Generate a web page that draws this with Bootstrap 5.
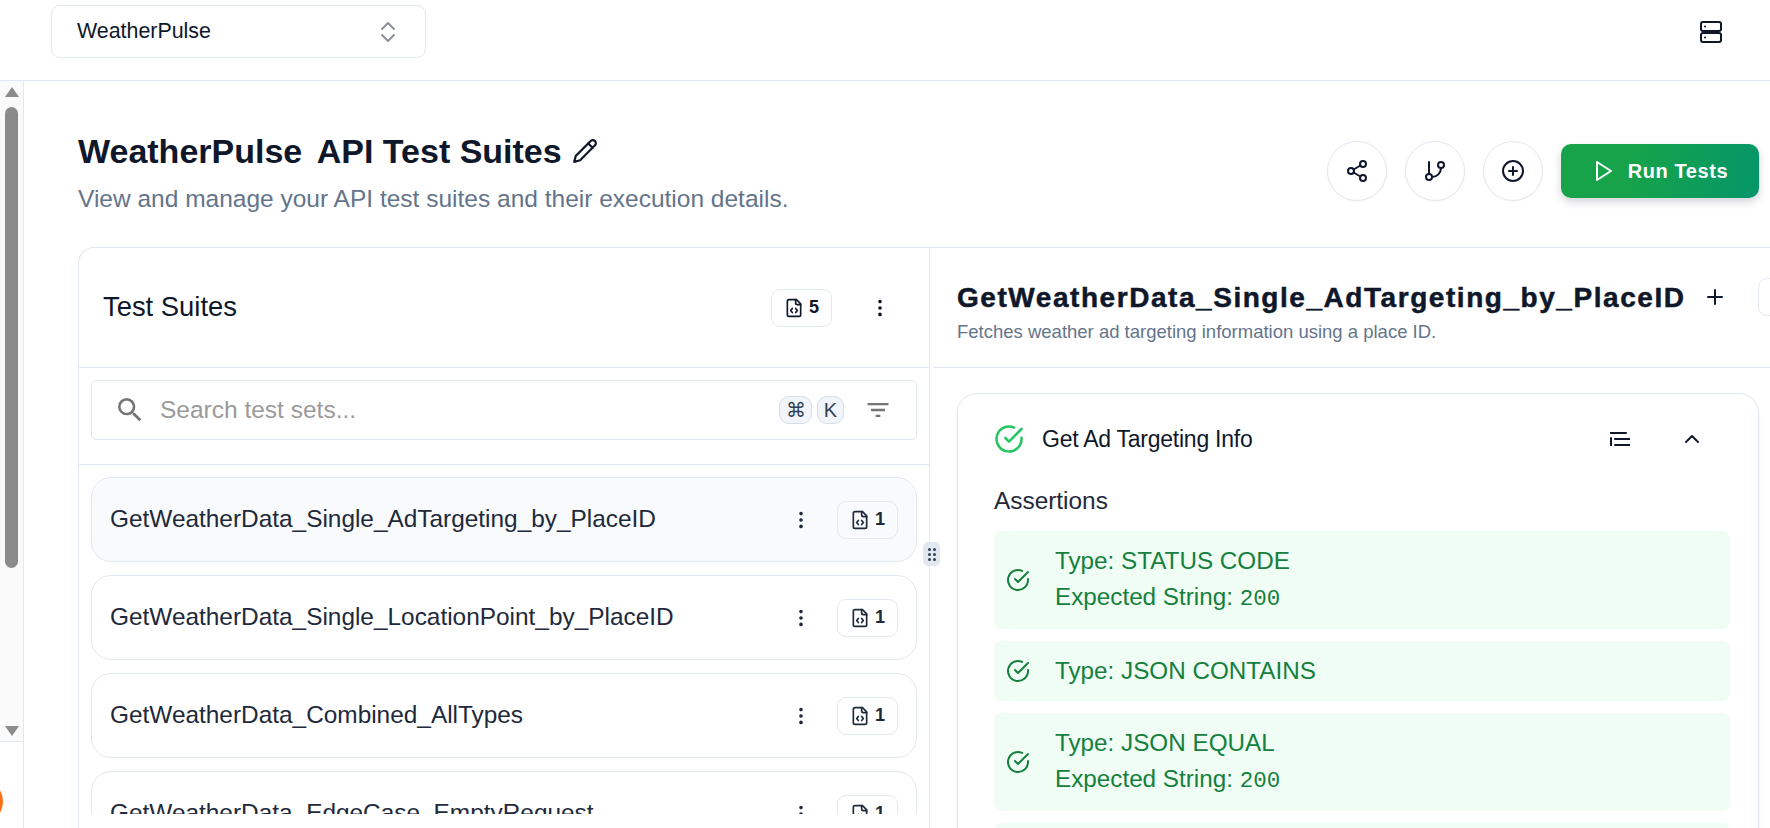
<!DOCTYPE html>
<html lang="en">
<head>
<meta charset="UTF-8">
<title>WeatherPulse API Test Suites</title>
<link href="https://cdn.jsdelivr.net/npm/bootstrap@5.3.3/dist/css/bootstrap.min.css" rel="stylesheet">
<style>
    html, body { height: 100%; }
    body {
        font-family: "Liberation Sans", Arial, sans-serif;
        color: #0f172a;
        background: #fff;
        overflow: hidden;
    }
    svg.ico { fill: none; stroke: currentColor; stroke-width: 2; stroke-linecap: round; stroke-linejoin: round; flex-shrink: 0; display: block; }

    .top-bar { height: 81px; padding: 0 47px 17px 51px; border-bottom: 1px solid #e2e8f0; flex-shrink: 0; }
    .project-select { width: 375px; height: 53px; padding: 0 27px 0 25px; border: 1px solid #e2e8f0; border-radius: 9px; font-size: 21.4px; }
    .project-select svg { color: #8a8f98; }

    .work-area { min-height: 0; }
    .side-rail { width: 24px; border-right: 1px solid #e2e8f0; flex-shrink: 0; }
    .rail-scroll { background: #fafafa; height: 661px; padding: 5px 5px 0; border-bottom: 1px solid #e2e8f0; }
    .arrow-up { width: 0; height: 0; margin: 1px auto 10px; border: 7.5px solid transparent; border-top: 0; border-bottom: 10px solid #8b8b8b; }
    .arrow-down { width: 0; height: 0; margin: auto auto 5px; border: 7.5px solid transparent; border-bottom: 0; border-top: 10px solid #8b8b8b; }
    .rail-thumb { width: 13px; height: 461px; background: #8b8b8b; border-radius: 7px; }
    .rail-foot { padding-top: 38px; overflow: hidden; flex-grow: 1; }
    .avatar-dot { width: 43px; height: 43px; border-radius: 50%; background: #f97316; margin-left: -40px; }

    .content-pane { min-width: 0; padding: 47px 0 0 54px; }
    .head-row { padding-right: 11px; height: 119px; flex-shrink: 0; }
    .title-line { gap: 10px; }
    .page-title { font-size: 34px; font-weight: 700; line-height: 46px; margin: 0; }
    .api-words { margin-left: 5px; }
    .page-sub { font-size: 24.5px; color: #64748b; line-height: 34px; margin-top: 8px; }
    .head-actions { gap: 18px; margin-top: 13px; }
    .round-btn { width: 60px; height: 60px; border-radius: 50%; border: 1px solid #e2e8f0; background: #fff; color: #0f172a; padding: 0; box-shadow: 0 1px 2px rgba(15,23,42,.03); }
    .run-btn { width: 198px; height: 54px; border: 0; border-radius: 10px; color: #fff; font-weight: 700; font-size: 20px; letter-spacing: .6px; background: linear-gradient(100deg, #16a34a 35%, #059669 100%); box-shadow: 0 4px 8px rgba(15,23,42,.18); }

    .suites-card { min-height: 0; width: 1760px; border: 1px solid #e2e8f0; border-bottom: 0; border-radius: 16px 0 0 0; }
    .left-panel { width: 851px; flex-shrink: 0; border-right: 1px solid #e2e8f0; position: relative; }
    .panel-head { height: 120px; padding: 0 38px 0 24px; border-bottom: 1px solid #e2e8f0; flex-shrink: 0; }
    .panel-title { font-size: 27.4px; margin: 0; font-weight: 400; }
    .head-tools { gap: 37px; }
    .count-pill { height: 38px; width: 61px; border: 1px solid #e2e8f0; border-radius: 9px; font-size: 18px; font-weight: 700; gap: 5px; background: #fff; }
    .search-wrap { height: 97px; padding: 12px 12px 24px; border-bottom: 1px solid #e2e8f0; flex-shrink: 0; }
    .search-box { height: 60px; border: 1px solid #e2e8f0; border-radius: 5px; padding: 0 24px 0 22px; }
    .search-box svg.mat { fill: #757575; }
    .search-input { border: 0; outline: 0; background: transparent; font: 24.5px "Liberation Sans", Arial, sans-serif; color: #0f172a; min-width: 0; }
    .search-input::placeholder { color: #9a9a9a; opacity: 1; }
    .key-cap { height: 28px; border: 1px solid #d5deea; background: #f1f5f9; border-radius: 10px; font-size: 20px; color: #334155; }
    .key-cmd { width: 33px; margin-right: 5px; }
    .key-k { width: 27px; }
    .filter-ico { margin-left: 20px; }
    .suite-list { height: 349px; overflow: hidden; padding: 12px 12px 0; gap: 13px; }
    .suite-row { height: 85px; flex-shrink: 0; border: 1px solid #e2e8f0; border-radius: 20px; padding: 0 18px 0 18px; font-size: 24.4px; color: #1e293b; }
    .suite-row.is-active { background: #f8fafc; }
    .suite-row .count-pill { background: transparent; margin-left: 25px; }
    .drag-handle { position: absolute; right: -11px; top: 294px; width: 17px; height: 24px; background: #e2e8f0; border-radius: 5px; z-index: 2; display: grid; grid-template-columns: 3px 3px; gap: 2px 2px; place-content: center; }
    .drag-handle i { width: 3px; height: 3px; background: #334155; border-radius: 50%; }

    .detail-panel { min-width: 0; }
    .detail-head { height: 120px; margin-left: 3px; padding: 8px 0 0 24px; border-bottom: 1px solid #e2e8f0; flex-shrink: 0; }
    .detail-title { font-size: 28px; font-weight: 700; margin: 0; line-height: 34px; letter-spacing: 1.55px; -webkit-text-stroke: .5px #0f172a; white-space: nowrap; }
    .detail-sub { font-size: 18.5px; color: #64748b; margin-top: 6px; line-height: 22px; }
    .title-plus { margin: 0 0 30px 18px; }
    .ghost-pill { width: 60px; height: 38px; border: 1px solid #e2e8f0; border-radius: 9px; flex-shrink: 0; margin: 0 0 30px 31px; }
    .detail-body { padding: 25px 0 0 27px; width: 840px; }
    .step-card { width: 802px; height: 500px; border: 1px solid #e2e8f0; border-radius: 20px; padding: 0 28px 0 36px; box-shadow: 0 1px 3px rgba(15,23,42,.08); }
    .step-head { height: 90px; }
    .step-title { font-size: 23px; letter-spacing: -.25px; margin-left: 18px; }
    .outline-ico { margin-right: 50px; }
    .collapse-ico { margin-right: 26px; }
    .assert-label { font-size: 24.4px; line-height: 34px; margin-bottom: 13px; color: #1e293b; }
    .assert-box { background: #f0fdf4; color: #15803d; border-radius: 8px; padding: 12px 12px; margin-bottom: 12px; gap: 25px; font-size: 24.25px; line-height: 36px; min-height: 60px; }
    .assert-mono { font-family: "Liberation Mono", monospace; font-size: 22.5px; }
</style>
</head>
<body class="d-flex flex-column">

<header class="top-bar d-flex align-items-center justify-content-between">
    <div class="project-select d-flex align-items-center justify-content-between">
        <span>WeatherPulse</span>
        <svg class="ico" width="20" height="24" viewBox="0 0 20 24"><path d="M4 9l6-6 6 6M4 15l6 6 6-6"/></svg>
    </div>
    <svg class="ico" width="24" height="24" viewBox="0 0 24 24"><rect x="2" y="2" width="20" height="9" rx="2"/><rect x="2" y="13" width="20" height="9" rx="2"/><path d="M6 6.5h.01M6 17.5h.01"/></svg>
</header>

<div class="work-area d-flex flex-grow-1">
    <aside class="side-rail d-flex flex-column">
        <div class="rail-scroll d-flex flex-column">
            <div class="arrow-up"></div>
            <div class="rail-thumb"></div>
            <div class="arrow-down"></div>
        </div>
        <div class="rail-foot"><div class="avatar-dot"></div></div>
    </aside>

    <main class="content-pane flex-grow-1 d-flex flex-column">
        <div class="head-row d-flex justify-content-between">
            <div>
                <div class="title-line d-flex align-items-center">
                    <h1 class="page-title">WeatherPulse <span class="api-words">API Test Suites</span></h1>
                    <svg class="ico" width="26" height="26" viewBox="0 0 24 24"><path d="M17 3a2.85 2.83 0 1 1 4 4L7.5 20.5 2 22l1.5-5.5Z"/><path d="m15 5 4 4"/></svg>
                </div>
                <div class="page-sub">View and manage your API test suites and their execution details.</div>
            </div>
            <div class="head-actions d-flex align-items-center align-self-start">
                <button class="round-btn d-flex align-items-center justify-content-center" aria-label="Share">
                    <svg class="ico" width="24" height="24" viewBox="0 0 24 24"><circle cx="18" cy="5" r="3"/><circle cx="6" cy="12" r="3"/><circle cx="18" cy="19" r="3"/><path d="M8.59 13.51l6.83 3.98M15.41 6.51l-6.82 3.98"/></svg>
                </button>
                <button class="round-btn d-flex align-items-center justify-content-center" aria-label="Branch">
                    <svg class="ico" width="24" height="24" viewBox="0 0 24 24"><path d="M6 3v12"/><circle cx="18" cy="6" r="3"/><circle cx="6" cy="18" r="3"/><path d="M18 9a9 9 0 0 1-9 9"/></svg>
                </button>
                <button class="round-btn d-flex align-items-center justify-content-center" aria-label="Add">
                    <svg class="ico" width="24" height="24" viewBox="0 0 24 24"><circle cx="12" cy="12" r="10"/><path d="M8 12h8M12 8v8"/></svg>
                </button>
                <button class="run-btn btn d-flex align-items-center justify-content-center gap-2">
                    <svg class="ico" width="24" height="24" viewBox="0 0 24 24"><polygon points="5 3 19 12 5 21 5 3"/></svg>
                    <span class="ms-1">Run Tests</span>
                </button>
            </div>
        </div>

        <section class="suites-card d-flex flex-grow-1">
            <div class="left-panel d-flex flex-column">
                <div class="panel-head d-flex align-items-center justify-content-between">
                    <h2 class="panel-title">Test Suites</h2>
                    <div class="head-tools d-flex align-items-center">
                        <span class="count-pill d-flex align-items-center justify-content-center">
                            <svg class="ico" width="20" height="20" viewBox="0 0 24 24"><path d="M10 12.5 8 15l2 2.5M14 12.5l2 2.5-2 2.5M14 2v4a2 2 0 0 0 2 2h4"/><path d="M15 2H6a2 2 0 0 0-2 2v16a2 2 0 0 0 2 2h12a2 2 0 0 0 2-2V7z"/></svg>5
                        </span>
                        <svg class="ico" width="22" height="22" viewBox="0 0 24 24"><circle cx="12" cy="5" r="1"/><circle cx="12" cy="12" r="1"/><circle cx="12" cy="19" r="1"/></svg>
                    </div>
                </div>
                <div class="search-wrap">
                    <div class="search-box d-flex align-items-center">
                        <svg class="mat me-2" width="32" height="32" viewBox="0 0 24 24"><path d="M15.5 14h-.79l-.28-.27A6.47 6.47 0 0 0 16 9.5 6.5 6.5 0 1 0 9.5 16c1.61 0 3.09-.59 4.23-1.57l.27.28v.79l5 4.99L20.49 19l-4.99-5zm-6 0C7.01 14 5 11.99 5 9.5S7.01 5 9.5 5 14 7.01 14 9.5 11.99 14 9.5 14z"/></svg>
                        <input class="search-input flex-grow-1 ms-1" type="text" placeholder="Search test sets...">
                        <span class="key-cap key-cmd d-flex align-items-center justify-content-center">⌘</span>
                        <span class="key-cap key-k d-flex align-items-center justify-content-center">K</span>
                        <svg class="mat filter-ico" width="28" height="28" viewBox="0 0 24 24"><path d="M10 18h4v-2h-4v2zM3 6v2h18V6H3zm3 7h12v-2H6v2z"/></svg>
                    </div>
                </div>
                <div class="suite-list d-flex flex-column" id="suiteList"></div>
                <div class="drag-handle"><i></i><i></i><i></i><i></i><i></i><i></i></div>
            </div>

            <div class="detail-panel flex-grow-1 d-flex flex-column">
                <div class="detail-head d-flex align-items-center">
                    <div>
                        <h2 class="detail-title">GetWeatherData_Single_AdTargeting_by_PlaceID</h2>
                        <div class="detail-sub">Fetches weather ad targeting information using a place ID.</div>
                    </div>
                    <svg class="ico title-plus" width="24" height="24" viewBox="0 0 24 24"><path d="M5 12h14M12 5v14"/></svg>
                    <div class="ghost-pill"></div>
                </div>
                <div class="detail-body">
                    <div class="step-card">
                        <div class="step-head d-flex align-items-center">
                            <svg class="ico" width="30" height="30" viewBox="0 0 24 24" style="color:#22c55e"><path d="M22 11.08V12a10 10 0 1 1-5.93-9.14"/><path d="M22 4 12 14.01l-3-3"/></svg>
                            <span class="step-title flex-grow-1">Get Ad Targeting Info</span>
                            <svg class="ico outline-ico" width="20" height="14" viewBox="0 0 20 14" stroke-linecap="butt"><path d="M0 1h16M5 7h15M5 13h15M1 6v8"/></svg>
                            <svg class="ico collapse-ico" width="24" height="24" viewBox="0 0 24 24"><path d="m6 15 6-6 6 6"/></svg>
                        </div>
                        <div class="assert-label">Assertions</div>
                        <div id="assertList"></div>
                    </div>
                </div>
            </div>
        </section>
    </main>
</div>

<script>
    const fileIcon = '<svg class="ico" width="20" height="20" viewBox="0 0 24 24"><path d="M10 12.5 8 15l2 2.5M14 12.5l2 2.5-2 2.5M14 2v4a2 2 0 0 0 2 2h4"/><path d="M15 2H6a2 2 0 0 0-2 2v16a2 2 0 0 0 2 2h12a2 2 0 0 0 2-2V7z"/></svg>';
    const kebabIcon = '<svg class="ico" width="22" height="22" viewBox="0 0 24 24"><circle cx="12" cy="5" r="1"/><circle cx="12" cy="12" r="1"/><circle cx="12" cy="19" r="1"/></svg>';
    const checkIcon = '<svg class="ico" width="24" height="24" viewBox="0 0 24 24"><path d="M22 11.08V12a10 10 0 1 1-5.93-9.14"/><path d="M22 4 12 14.01l-3-3"/></svg>';

    const suites = [
        "GetWeatherData_Single_AdTargeting_by_PlaceID",
        "GetWeatherData_Single_LocationPoint_by_PlaceID",
        "GetWeatherData_Combined_AllTypes",
        "GetWeatherData_EdgeCase_EmptyRequest"
    ];
    document.getElementById("suiteList").innerHTML = suites.map((name, i) => `
        <div class="suite-row d-flex align-items-center ${i === 0 ? "is-active" : ""}">
            <span class="flex-grow-1">${name}</span>
            ${kebabIcon}
            <span class="count-pill d-flex align-items-center justify-content-center">${fileIcon}1</span>
        </div>`).join("");

    // the fourth box only peeks in at the bottom edge
    const assertions = [
        { type: "STATUS CODE", expected: "200" },
        { type: "JSON CONTAINS" },
        { type: "JSON EQUAL", expected: "200" },
        {}
    ];
    document.getElementById("assertList").innerHTML = assertions.map(a => `
        <div class="assert-box d-flex align-items-center">
            ${a.type ? checkIcon : ""}
            <div>
                ${a.type ? `<div>Type: ${a.type}</div>` : ""}
                ${a.expected ? `<div>Expected String: <span class="assert-mono">${a.expected}</span></div>` : ""}
            </div>
        </div>`).join("");
</script>
<script src="https://cdn.jsdelivr.net/npm/bootstrap@5.3.3/dist/js/bootstrap.bundle.min.js"></script>
</body>
</html>
